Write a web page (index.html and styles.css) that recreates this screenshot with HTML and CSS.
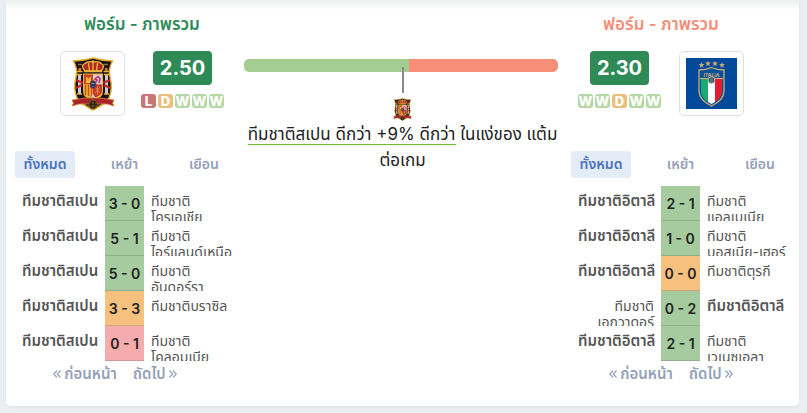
FILE: index.html
```html
<!DOCTYPE html>
<html lang="th">
<head>
<meta charset="utf-8">
<meta name="viewport" content="width=device-width, initial-scale=1">
<title>ฟอร์ม - ภาพรวม</title>
<link rel="stylesheet" href="styles.css">
</head>
<body>
<svg class="defs" width="0" height="0" aria-hidden="true">
  <symbol id="spain" viewBox="0 0 44 54">
    <path d="M2.500 4Q12 4 22 1Q32 4 41.500 4Q37 12 39 20Q42 32 38 41Q34 47 22 53Q10 47 6 41Q2 32 5 20Q7 12 2.500 4Z" fill="#17101f" stroke="#e2ac27" stroke-width="1.400"/>
    <path d="M7 7.500h4M33 7.500h4" stroke="#8d7434" stroke-width="1.600"/>
    <path d="M14 14Q9 8 14 6.500Q16 4 22 5Q28 4 30 6.500Q35 8 30 14Z" fill="#b02a25" stroke="#eebb38" stroke-width="1.300"/>
    <path d="M22 3v11M17.500 6l1 8M26.500 6l-1 8M13 14.500h18" stroke="#eebb38" stroke-width="1.300"/>
    <path d="M7 17h3v20H7zM34 17h3v20h-3z" fill="#c9cad6"/>
    <path d="M5.500 14.500h6M32.500 14.500h6M6 17.500h5M33 17.500h5M6 37h5M33 37h5" stroke="#e8ae2b" stroke-width="1.600"/>
    <path d="M7.500 11h2.500v3H7.500zM34 11h2.500v3H34z" fill="#e0812c"/>
    <path d="M5 23l7 3M5 31l6-3M39 23l-7 3M39 31l-6-3" stroke="#c5252c" stroke-width="2.200"/>
    <path d="M12 16.500h20v18q0 7-10 8q-10-1-10-8z" fill="#e8b23a"/>
    <path d="M13 17.500h9v10h-9z" fill="#c8451f"/>
    <path d="M15 26v-6h1.500v1.500h2V20H20v6z" fill="#f3b93a"/>
    <path d="M22 17.500h9v10h-9z" fill="#dcc9d6"/>
    <path d="M24.500 26l1.500-3-2-1 3-2.500 2 2-1 4.500" fill="none" stroke="#b03965" stroke-width="1.600"/>
    <path d="M13 27.500h9v13q-9-1-9-7z" fill="#edb52d"/>
    <path d="M14.500 28v10M17.500 28v11M20.500 28v12" stroke="#c84a22" stroke-width="1.400"/>
    <path d="M22 27.500h9v6q0 6-9 7z" fill="#bd3a29"/>
    <path d="M24 30l5 6M29 30l-5 6M26.500 29v9" stroke="#e8963a" stroke-width=".8"/>
    <ellipse cx="22" cy="27.500" rx="3" ry="4" fill="#203a78" stroke="#b52b33" stroke-width=".7"/>
    <path d="M20.500 26.500h3M22 29v1" stroke="#d9b64a" stroke-width=".7"/>
    <path d="M22 36.500l2.500 4.500h-5z" fill="#cfcbd4"/>
    <path d="M1 43Q8 42 14 41H30Q36 42 43 43L41.500 46L43 49Q35 46 30 47H14Q9 46 1 49L2.500 46Z" fill="#a8232a" stroke="#d9802c" stroke-width=".8"/>
    <circle cx="22" cy="47.500" r="4.500" fill="#292016" stroke="#a97926" stroke-width=".6"/>
    <path d="M18 46h8M18 49h8M22 43v8" stroke="#8a6524" stroke-width=".6"/>
  </symbol>
  <symbol id="star" viewBox="0 0 10 10">
    <path d="M5 0l1.300 3.500H10L7.100 5.700 8.100 9.500 5 7.300 1.900 9.500 2.900 5.700 0 3.500h3.700z" fill="#c9ad70"/>
  </symbol>
  <symbol id="italy" viewBox="0 0 51 51">
    <path fill="#00489a" d="M0 0h51v51H0z"/>
    <use href="#star" x="12.500" y="4" width="6" height="6"/>
    <use href="#star" x="19" y="2.500" width="6" height="6"/>
    <use href="#star" x="26" y="2.500" width="6" height="6"/>
    <use href="#star" x="33" y="4" width="6" height="6"/>
    <path d="M13 12Q20 12 25.500 9.500Q31 12 38 12V33Q38 42 25.500 48Q13 42 13 33Z" fill="#07509a" stroke="#c9ad70" stroke-width="1.300"/>
    <path d="M15 21h7v23q-7-4-7-11z" fill="#18ac73"/>
    <path d="M22 21h7v23l-3.500 2-3.500-2z" fill="#fff"/>
    <path d="M29 21h7v12q0 7-7 11z" fill="#e51b32"/>
    <path d="M14 20.500h23" stroke="#c9ad70" stroke-width="1.200"/>
    <circle cx="25.500" cy="22" r="3.200" fill="#07509a" stroke="#c9ad70" stroke-width="1.100"/>
    <path d="M24 21h3M24 23h3" stroke="#c9ad70" stroke-width=".8"/>
    <text x="25.500" y="18.500" text-anchor="middle" class="crest-name">ITALIA</text>
  </symbol>
  <symbol id="prev" viewBox="0 0 8 8"><path d="M4 .5L.8 4 4 7.500M7.500.5L4.300 4l3.200 3.500" fill="none" stroke="currentColor" stroke-width="1.200"/></symbol>
  <symbol id="next" viewBox="0 0 8 8"><path d="M.5.5L3.700 4 .5 7.500M4 .5L7.200 4 4 7.500" fill="none" stroke="currentColor" stroke-width="1.200"/></symbol>
</svg>
<main class="card">
  <section class="team home">
    <header class="summary">
      <h2>ฟอร์ม - ภาพรวม</h2>
      <div class="overview">
        <div class="crest"><svg class="crest-spain" role="img" aria-label="ทีมชาติสเปน"><use href="#spain"/></svg></div>
        <div class="rating">
          <strong class="points">2.50</strong>
          <div class="form"><span class="loss">L</span><span class="draw">D</span><span>W</span><span>W</span><span>W</span></div>
        </div>
      </div>
    </header>
    <nav class="tabs"><button class="active" type="button">ทั้งหมด</button><button type="button">เหย้า</button><button type="button">เยือน</button></nav>
    <table>
      <tr><td><div class="name own">ทีมชาติสเปน</div></td><td class="score">3 - 0</td><td><div class="name">ทีมชาติ<br>โครเอเชีย</div></td></tr>
      <tr><td><div class="name own">ทีมชาติสเปน</div></td><td class="score">5 - 1</td><td><div class="name">ทีมชาติ<br>ไอร์แลนด์เหนือ</div></td></tr>
      <tr><td><div class="name own">ทีมชาติสเปน</div></td><td class="score">5 - 0</td><td><div class="name">ทีมชาติ<br>อันดอร์รา</div></td></tr>
      <tr><td><div class="name own">ทีมชาติสเปน</div></td><td class="score drawn">3 - 3</td><td><div class="name">ทีมชาติบราซิล</div></td></tr>
      <tr><td><div class="name own">ทีมชาติสเปน</div></td><td class="score lost">0 - 1</td><td><div class="name">ทีมชาติ<br>โคลอมเบีย</div></td></tr>
    </table>
    <nav class="pager"><a href="#"><svg><use href="#prev"/></svg>ก่อนหน้า</a><a href="#">ถัดไป<svg><use href="#next"/></svg></a></nav>
  </section>
  <section class="compare">
    <div class="bar"><div class="bar-home"></div><div class="bar-away"></div></div>
    <div class="marker"></div>
    <svg class="mini-crest" aria-hidden="true"><use href="#spain"/></svg>
    <p><span class="advantage">ทีมชาติสเปน ดีกว่า +9% ดีกว่า</span> ในแง่ของ แต้ม<wbr>ต่อเกม</p>
  </section>
  <section class="team away">
    <header class="summary">
      <h2>ฟอร์ม - ภาพรวม</h2>
      <div class="overview">
        <div class="rating">
          <strong class="points">2.30</strong>
          <div class="form"><span>W</span><span>W</span><span class="draw">D</span><span>W</span><span>W</span></div>
        </div>
        <div class="crest"><svg class="crest-italy" role="img" aria-label="ทีมชาติอิตาลี"><use href="#italy"/></svg></div>
      </div>
    </header>
    <nav class="tabs"><button class="active" type="button">ทั้งหมด</button><button type="button">เหย้า</button><button type="button">เยือน</button></nav>
    <table>
      <tr><td><div class="name own">ทีมชาติอิตาลี</div></td><td class="score">2 - 1</td><td><div class="name">ทีมชาติ<br>แอลเบเนีย</div></td></tr>
      <tr><td><div class="name own">ทีมชาติอิตาลี</div></td><td class="score">1 - 0</td><td><div class="name">ทีมชาติ<br>บอสเนีย-เฮอร์</div></td></tr>
      <tr><td><div class="name own">ทีมชาติอิตาลี</div></td><td class="score drawn">0 - 0</td><td><div class="name">ทีมชาติตุรกี</div></td></tr>
      <tr><td><div class="name">ทีมชาติ<br>เอกวาดอร์</div></td><td class="score">0 - 2</td><td><div class="name own">ทีมชาติอิตาลี</div></td></tr>
      <tr><td><div class="name own">ทีมชาติอิตาลี</div></td><td class="score">2 - 1</td><td><div class="name">ทีมชาติ<br>เวเนซุเอลา</div></td></tr>
    </table>
    <nav class="pager"><a href="#"><svg><use href="#prev"/></svg>ก่อนหน้า</a><a href="#">ถัดไป<svg><use href="#next"/></svg></a></nav>
  </section>
</main>
</body>
</html>
```
FILE: styles.css
```css
* { box-sizing: border-box; }
body {
  margin: 0;
  padding: 0 8px 7px 6px;
  background: #ebeff2;
  color: #222;
  font-family: Inter, "Noto Sans Thai", "Noto Sans", sans-serif;
}
.defs { position: absolute; }
.card {
  display: grid;
  grid-template-columns: 219px minmax(0, 1fr) 219px;
  column-gap: 10px;
  padding: 12px 9px 20px;
  background: linear-gradient(#edf0ef, #fff 10px);
  border-radius: 0 0 5px 5px;
  box-shadow: 0 1px 3px #dde2e6;
}
.summary { display: flex; flex-direction: column; align-items: center; }
.home .summary { padding-left: 35px; }
.away .summary { padding-right: 39px; }
h2 { margin: 0; font-size: 17px; line-height: 24px; font-weight: 600; color: #2e8b57; white-space: nowrap; }
.away h2 { color: #f78d77; }
.overview { display: flex; align-items: flex-start; gap: 16px; margin-top: 15px; }
.away .overview { gap: 18px; }
.crest { display: grid; place-items: center; width: 65px; height: 65px; border: 1px solid #dddde5; border-radius: 5px; }
.crest-spain { width: 44px; height: 54px; }
.crest-italy { width: 51px; height: 51px; }
.crest-name { font: 700 5px Inter, sans-serif; fill: #c9ad70; }
.rating { display: flex; flex-direction: column; align-items: center; }
.points { padding: 0 7px; border-radius: 4px; background: #2e8b57; color: #fff; font-size: 20px; line-height: 34px; font-weight: 700; }
.form { display: flex; gap: 2px; margin-top: 9px; }
.form span { width: 15px; height: 14px; border-radius: 3px; background: #b5d6a5; color: #fff; text-align: center; font-size: 13px; line-height: 15px; font-weight: 800; }
.form .loss { background: #c97676; }
.form .draw { background: #eabf7e; }
.tabs { display: grid; grid-template-columns: 60px 1fr 60px; margin-top: 35px; }
.tabs button { padding: 0; height: 27px; border: 0; border-radius: 3px; background: transparent; color: #94a1b9; font: 600 14px Inter, "Noto Sans Thai", sans-serif; }
.tabs .active { background: #e4ecf7; color: #4a73c0; }
table { width: 100%; margin-top: 8px; border-collapse: separate; border-spacing: 0; table-layout: fixed; font-size: 14px; }
td { padding: 0; vertical-align: top; }
td:first-child { text-align: right; }
td:nth-child(2) { width: 39px; }
.name { height: 35px; padding: 7px 7px 0; overflow-x: visible; overflow-y: clip; line-height: 16px; color: #555; white-space: nowrap; }
.own { font-size: 15px; font-weight: 600; }
.score { height: 35px; border-bottom: 1px solid #8fae89; background: #a5cb9e; text-align: center; vertical-align: middle; font-weight: 600; }
.drawn { background: #f6c07e; border-color: #d1a573; }
.lost { background: #f6acac; border-color: #d19696; }
.pager { display: flex; justify-content: center; gap: 16px; padding-right: 19px; }
.pager a { display: flex; align-items: center; gap: 3px; color: #94a1b9; font-size: 15px; line-height: 25px; font-weight: 600; text-decoration: none; }
.pager svg { width: 8px; height: 8px; }
.compare { display: flex; flex-direction: column; align-items: center; padding-top: 47px; }
.bar { display: flex; align-self: stretch; margin-right: 3px; height: 13px; overflow: hidden; border-radius: 5px; }
.bar-home { width: 52.5%; background: #a3cd91; }
.bar-away { flex: 1; background: #f68e78; }
.marker { width: 2px; height: 26px; margin-top: -5px; background: #888; }
.mini-crest { width: 19px; height: 23px; margin-top: 5px; }
.compare p { margin: 0; font-size: 17px; line-height: 26px; text-align: center; }
.advantage { border-bottom: 1px solid #6cc02c; }
```
